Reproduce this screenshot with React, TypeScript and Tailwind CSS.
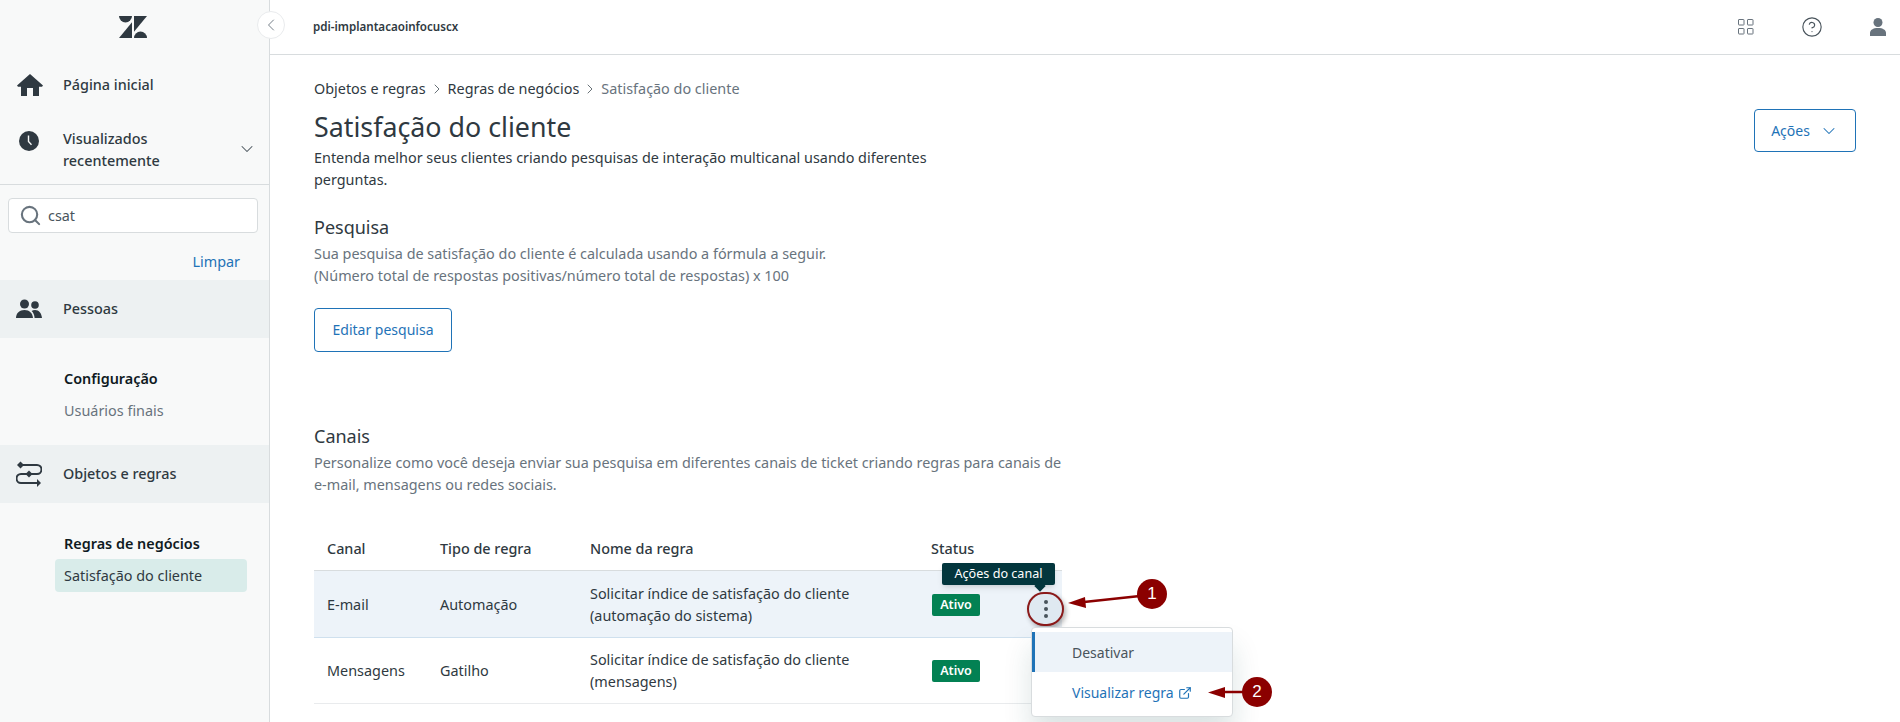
import { ChevronDown, ChevronLeft, ChevronRight, Search, ExternalLink, CircleHelp } from "lucide-react";

const ZendeskLogo = () => (
  <svg width="28" height="22" viewBox="0 0 28 22" fill="#2f3941">
    <path d="M13 6.2V22H0z" />
    <path d="M13 0a6.5 6.5 0 0 1-13 0z" />
    <path d="M15 22a6.5 6.5 0 0 1 13 0z" />
    <path d="M15 15.8V0h13z" />
  </svg>
);

const HomeIcon = () => (
  <svg width="26" height="22" viewBox="0 0 26 22" fill="#2f3941">
    <path d="M13 0 L26 11.500 L25 12.800 L22 12.800 V22 H16 V14 H10 V22 H4 V12.800 H1 L0 11.500 z" />
  </svg>
);

const ClockIcon = () => (
  <svg width="20" height="20" viewBox="0 0 20 20">
    <circle cx="10" cy="10" r="10" fill="#2f3941" />
    <path d="M9.5 4.500v6l3 3.200" stroke="#f8f9f9" strokeWidth="1.400" fill="none" />
  </svg>
);

const PeopleIcon = () => (
  <svg width="26" height="20" viewBox="0 0 26 20" fill="#2f3941">
    <circle cx="8.500" cy="5" r="4.500" />
    <circle cx="19" cy="6" r="3.800" />
    <path d="M0 19c0-5 3.500-8 8.500-8s8 3 8.500 8z" />
    <path d="M18.600 19c-.2-3-1.300-5.600-3-7 1-.7 2.100-1 3.400-1 4 0 6.500 3 7 8z" />
  </svg>
);

const RulesIcon = () => (
  <svg width="26" height="28" viewBox="0 0 26 28" fill="none" stroke="#2f3941" strokeWidth="2">
    <path d="M5 5h16a4.500 4.500 0 0 1 0 9H5a4.500 4.500 0 0 0 0 9h19" />
    <path d="M4.500 1.500l3.500 3.500-3.500 3.500L1 5z" fill="#2f3941" stroke="none" />
    <path d="M13 10.500l3.500 3.500-3.500 3.500L9.500 14z" fill="#2f3941" stroke="none" />
    <path d="M21 19l4 4-4 4z" fill="#2f3941" stroke="none" />
  </svg>
);

const GridIcon = () => (
  <svg width="16" height="16" viewBox="0 0 16 16" fill="none" stroke="#68737d" strokeWidth="1">
    <rect x="0.500" y="0.500" width="5.500" height="5.500" rx="0.500" />
    <rect x="9.500" y="0.500" width="5.500" height="5.500" rx="0.500" />
    <rect x="0.500" y="9.500" width="5.500" height="5.500" rx="0.500" />
    <rect x="9.500" y="9.500" width="5.500" height="5.500" rx="0.500" />
  </svg>
);

const UserIcon = () => (
  <svg width="16" height="18" viewBox="0 0 16 18" fill="#68737d">
    <circle cx="8" cy="4.500" r="4.500" />
    <path d="M0 18v-3c0-3 3-5 8-5s8 2 8 5v3z" />
  </svg>
);

const rows = [
  { canal: "E-mail", tipo: "Automação", nome: ["Solicitar índice de satisfação do cliente", "(automação do sistema)"], active: true },
  { canal: "Mensagens", tipo: "Gatilho", nome: ["Solicitar índice de satisfação do cliente", "(mensagens)"], active: false },
];

const App = () => {
  return (
    <div className="relative flex h-[722px] w-[1900px] overflow-hidden bg-white text-[14.4px] leading-[22px] text-[#2f3941] font-['Noto_Sans','Open_Sans',sans-serif]">
      {/* Sidebar */}
      <aside className="flex w-[270px] shrink-0 flex-col border-r border-[#d8dcde] bg-[#f8f9f9]">
        <div className="flex h-[54px] items-center justify-center pr-[4px]">
          <ZendeskLogo />
        </div>
        <div className="flex h-[62px] items-center pl-[17px]">
          <HomeIcon />
          <span className="ml-[20px] font-medium">Página inicial</span>
        </div>
        <div className="flex h-[69px] items-start border-b border-[#d8dcde] pl-[19px] pr-[12px]">
          <div className="mt-[15px]"><ClockIcon /></div>
          <span className="ml-[24px] mt-[12px] w-[160px] font-medium">Visualizados recentemente</span>
          <ChevronDown size={20} strokeWidth={1.250} className="ml-auto mt-[23px] text-[#49545c]" />
        </div>
        <div className="ml-[8px] mr-[11px] mt-[13px] flex h-[35px] items-center rounded-[4px] border border-[#d8dcde] bg-white pl-[10px]">
          <Search size={23} strokeWidth={2.200} className="text-[#68737d]" />
          <span className="ml-[6px] text-[#49545c]">csat</span>
        </div>
        <div className="mt-[18px] pr-[29px] text-right text-[#1f73b7]">Limpar</div>
        <div className="mt-[7px] flex h-[58px] items-center bg-[#edf1f2] pl-[16px]">
          <PeopleIcon />
          <span className="ml-[21px] font-medium">Pessoas</span>
        </div>
        <div className="mt-[30px] pl-[64px] font-semibold text-[#0f1a1f]">Configuração</div>
        <div className="mt-[10px] pl-[64px] text-[#68737d]">Usuários finais</div>
        <div className="mt-[23px] flex h-[58px] items-center bg-[#edf1f2] pl-[16px]">
          <RulesIcon />
          <span className="ml-[21px] font-medium">Objetos e regras</span>
        </div>
        <div className="mt-[30px] pl-[64px] font-semibold text-[#0f1a1f]">Regras de negócios</div>
        <div className="ml-[55px] mr-[22px] mt-[4px] flex h-[33px] items-center rounded-[4px] bg-[#d9ecea] pl-[9px] text-[#2f3941]">
          Satisfação do cliente
        </div>
      </aside>

      {/* Collapse toggle */}
      <div className="absolute left-[257px] top-[11px] flex h-[28px] w-[28px] items-center justify-center rounded-full border border-[#e9ebed] bg-white text-[#68737d]">
        <ChevronLeft size={20} strokeWidth={1.100} />
      </div>

      <div className="flex min-w-0 flex-1 flex-col">
        {/* Header */}
        <header className="flex h-[55px] shrink-0 items-center border-b border-[#d8dcde] pl-[43px] pr-[14px]">
          <span className="text-[11.600px] font-semibold">pdi-implantacaoinfocuscx</span>
          <div className="ml-auto flex items-center">
            <GridIcon />
            <CircleHelp size={22} strokeWidth={1.250} className="ml-[47px] text-[#49545c]" />
            <div className="ml-[47px]"><UserIcon /></div>
          </div>
        </header>

        {/* Main */}
        <main className="relative flex-1 pl-[44px] pr-[44px]">
          <nav className="mt-[23px] flex items-center">
            <span>Objetos e regras</span>
            <ChevronRight size={16} strokeWidth={1.250} className="mx-[3px] text-[#49545c]" />
            <span>Regras de negócios</span>
            <ChevronRight size={16} strokeWidth={1.250} className="mx-[3px] text-[#49545c]" />
            <span className="text-[#68737d]">Satisfação do cliente</span>
          </nav>

          <div className="flex items-start justify-between">
            <div className="w-[670px]">
              <h1 className="mt-[11px] text-[26.800px] leading-[32px]">Satisfação do cliente</h1>
              <p className="mt-[4px]">Entenda melhor seus clientes criando pesquisas de interação multicanal usando diferentes perguntas.</p>
            </div>
            <button className="mt-[9px] flex h-[43px] w-[102px] items-center justify-center gap-[9px] rounded-[4px] border border-[#1f73b7] text-[14px] text-[#1f73b7]">
              Ações
              <ChevronDown size={20} strokeWidth={1.250} />
            </button>
          </div>

          <h2 className="mt-[24px] text-[18px] leading-[24px]">Pesquisa</h2>
          <p className="mt-[4px] text-[#68737d]">
            Sua pesquisa de satisfação do cliente é calculada usando a fórmula a seguir.
            <br />
            (Número total de respostas positivas/número total de respostas) x 100
          </p>
          <button className="mt-[21px] h-[44px] w-[138px] rounded-[4px] border border-[#1f73b7] text-[14px] text-[#1f73b7]">
            Editar pesquisa
          </button>

          <h2 className="mt-[72px] text-[18px] leading-[24px]">Canais</h2>
          <p className="mt-[4px] w-[748px] text-[#68737d]">
            Personalize como você deseja enviar sua pesquisa em diferentes canais de ticket criando regras para canais de e-mail, mensagens ou redes sociais.
          </p>

          {/* Table */}
          <div className="mt-[42px] w-[748px]">
            <div className="grid h-[33px] grid-cols-[113px_150px_341px_1fr] items-start border-b border-[#d8dcde] pl-[13px] font-medium">
              <span>Canal</span>
              <span>Tipo de regra</span>
              <span>Nome da regra</span>
              <span>Status</span>
            </div>
            {rows.map((row) => (
              <div
                key={row.canal}
                className={`grid grid-cols-[113px_150px_341px_1fr] items-center border-b pl-[13px] pt-[1px] ${row.active ? "h-[67px] border-[#cfe0ee] bg-[#edf3f9]" : "h-[66px] border-[#e9ebed]"}`}
              >
                <span>{row.canal}</span>
                <span>{row.tipo}</span>
                <span>
                  {row.nome[0]}
                  <br />
                  {row.nome[1]}
                </span>
                <span className="ml-[1px] flex h-[22px] w-[48px] items-center justify-center rounded-[2px] bg-[#038153] text-[12.500px] font-semibold text-white">
                  Ativo
                </span>
              </div>
            ))}
          </div>
        </main>
      </div>

      {/* Tooltip */}
      <div className="absolute left-[942px] top-[563px] flex h-[22px] w-[113px] items-center justify-center rounded-[2px] bg-[#03363d] text-[12.600px] text-white shadow-md">
        Ações do canal
        <span className="absolute left-[94px] top-[19px] h-[8px] w-[8px] rotate-45 bg-[#03363d]" />
      </div>

      {/* Kebab button with callout ring */}
      <div className="absolute left-[1027px] top-[592px] flex h-[34px] w-[37px] flex-col items-center justify-center gap-[3px] rounded-full border-2 border-[#8b1a1a] bg-[#dfe9f1] shadow-[2px_3px_5px_rgba(0,0,0,0.3)]">
        <span className="h-[4px] w-[4px] rounded-full bg-[#49545c]" />
        <span className="h-[4px] w-[4px] rounded-full bg-[#49545c]" />
        <span className="h-[4px] w-[4px] rounded-full bg-[#49545c]" />
      </div>

      {/* Dropdown menu */}
      <div className="absolute left-[1031px] top-[627px] h-[90px] w-[202px] rounded-[4px] border border-[#d8dcde] bg-white py-[4px] shadow-[0_20px_28px_rgba(23,73,77,0.15)]">
        <div className="flex h-[40px] items-center border-l-[3px] border-[#1f73b7] bg-[#edf3f9] pl-[37px] pt-[1px] text-[14px] text-[#49545c]">
          Desativar
        </div>
        <div className="flex h-[40px] items-center pl-[40px] pt-[1px] text-[14px] text-[#1f73b7]">
          Visualizar regra
          <ExternalLink size={14} strokeWidth={2} className="ml-[4px]" />
        </div>
      </div>

      {/* Annotations */}
      <svg className="absolute left-[1060px] top-[575px]" width="220" height="135" viewBox="0 0 220 135" fill="none">
        <path d="M80 21 L24 27" stroke="#8b0000" strokeWidth="2.500" />
        <path d="M8 28 L25 22 L26 33 z" fill="#8b0000" />
        <path d="M185 117 L165 117" stroke="#8b0000" strokeWidth="2.500" />
        <path d="M148 117.500 L165 112 L165 123 z" fill="#8b0000" />
      </svg>
      <div className="absolute left-[1137px] top-[579px] flex h-[30px] w-[30px] items-center justify-center rounded-full bg-[#8b0000] text-[17px] text-white font-['Liberation_Sans',sans-serif]">
        1
      </div>
      <div className="absolute left-[1242px] top-[677px] flex h-[30px] w-[30px] items-center justify-center rounded-full bg-[#8b0000] text-[17px] text-white font-['Liberation_Sans',sans-serif]">
        2
      </div>
    </div>
  );
};

export default App;
